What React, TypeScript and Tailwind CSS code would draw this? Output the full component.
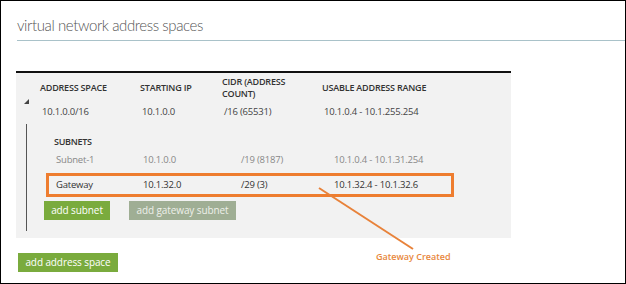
import React from "react";

// #################################
// ### Virtual network address spaces
// #################################

const font = { fontFamily: '"Open Sans", "Noto Sans", sans-serif' };

function Triangle() {
  return (
    <svg width="5" height="5" viewBox="0 0 5 5">
      <polygon points="5,0 5,5 0,5" fill="#444" />
    </svg>
  );
}

function SubnetCells({ name, ip, cidr, range }: { name: string; ip: string; cidr: string; range: string }) {
  return (
    <>
      <div className="w-[87px]">{name}</div>
      <div className="w-[98px]">{ip}</div>
      <div className="w-[93px]">{cidr}</div>
      <div>{range}</div>
    </>
  );
}

export default function App() {
  return (
    <div
      className="relative w-[626px] h-[284px] overflow-hidden border border-black bg-white"
      style={font}
    >
      {/* title */}
      <div className="ml-[16px] h-[40px] border-b border-[#a9c2c9] pt-[12px]">
        <span
          className="text-[15px] font-light leading-[22px] text-[#555] tracking-[-0.4px]"
          style={{ fontFamily: 'Lato, "Open Sans", sans-serif' }}
        >
          virtual network address spaces
        </span>
      </div>

      {/* address space panel */}
      <div className="mt-[30px] ml-[15px] w-[495px] border-t-2 border-[#111] bg-[#f2f2f2] pb-[7px]">
        <div className="flex">
          <div className="w-[24px] pl-[8px] pt-[26px]">
            <Triangle />
          </div>
          <div>
            <div className="flex h-[30px] items-center text-[9px] font-semibold leading-[12px] tracking-[-0.2px] text-[#333]">
              <div className="w-[100px]">ADDRESS SPACE</div>
              <div className="w-[82px]">STARTING IP</div>
              <div className="w-[100px]">
                CIDR (ADDRESS
                <br />
                COUNT)
              </div>
              <div>USABLE ADDRESS RANGE</div>
            </div>
            <div className="flex h-[18px] items-center pl-[2px] text-[9.5px] tracking-[-0.2px] text-[#444]">
              <div className="w-[100px]">10.1.0.0/16</div>
              <div className="w-[82px]">10.1.0.0</div>
              <div className="w-[100px]">/16 (65531)</div>
              <div>10.1.0.4 - 10.1.255.254</div>
            </div>
          </div>
        </div>

        {/* subnets */}
        <div className="ml-[10px] mt-[3px] border-l border-[#555] pt-[9px] pb-[11px]">
          <div className="ml-[27px] flex h-[18px] items-center text-[9px] font-semibold tracking-[-0.3px] text-[#333]">
            SUBNETS
          </div>
          <div className="ml-[29px] flex h-[18px] items-center text-[9.5px] tracking-[-0.2px] text-[#888]">
            <SubnetCells name="Subnet-1" ip="10.1.0.0" cidr="/19 (8187)" range="10.1.0.4 - 10.1.31.254" />
          </div>
          <div className="ml-[19px] mt-[4px] flex h-[24px] w-[408px] items-center border-[3px] border-[#ee7d2f] pl-[7px] text-[9.5px] tracking-[-0.2px] text-[#333]">
            <SubnetCells name="Gateway" ip="10.1.32.0" cidr="/29 (3)" range="10.1.32.4 - 10.1.32.6" />
          </div>
          <div className="ml-[17px] mt-[4px] flex gap-[19px] text-[10px] tracking-[-0.1px] text-white">
            <button className="h-[19px] w-[66px] bg-[#7aab3d] leading-[19px]">add subnet</button>
            <button className="h-[19px] w-[107px] bg-[#9fae94] leading-[19px] text-[#eef0ea]">
              add gateway subnet
            </button>
          </div>
        </div>
      </div>

      <button className="ml-[17px] mt-[15px] h-[19px] w-[100px] bg-[#7aab3d] text-[10px] leading-[19px] tracking-[-0.1px] text-white">
        add address space
      </button>

      {/* annotation */}
      <svg className="absolute left-0 top-0" width="626" height="284">
        <line x1="318" y1="187" x2="412" y2="248" stroke="#e8823a" strokeWidth="2" />
      </svg>
      <div className="absolute left-[375px] top-[249px] text-[9px] font-semibold text-[#e8873c]">
        Gateway Created
      </div>
    </div>
  );
}
